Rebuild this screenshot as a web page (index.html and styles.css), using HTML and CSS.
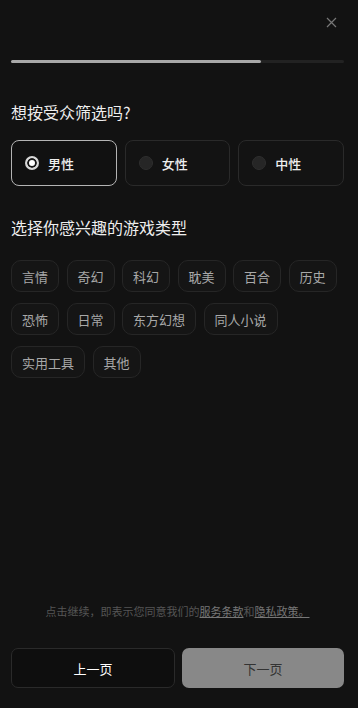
FILE: index.html
```html
<!DOCTYPE html>
<html lang="zh-CN">
<head>
    <meta charset="UTF-8">
    <meta name="viewport" content="width=device-width, initial-scale=1.0">
    <title>偏好设置</title>
    <link rel="stylesheet" href="styles.css">
</head>
<body>
    <div class="page">
        <div class="top">
            <button class="close" aria-label="关闭">
                <svg width="11" height="11" viewBox="0 0 11 11">
                    <path d="M1 1 L10 10 M10 1 L1 10" stroke="#777" stroke-width="1.2" fill="none"/>
                </svg>
            </button>
        </div>

        <div class="progress"><div class="progress-fill"></div></div>

        <div class="title">想按受众筛选吗?</div>
        <div class="genders">
            <div class="gender selected"><span class="radio"></span>男性</div>
            <div class="gender"><span class="radio"></span>女性</div>
            <div class="gender"><span class="radio"></span>中性</div>
        </div>

        <div class="title title-second">选择你感兴趣的游戏类型</div>
        <div class="tags">
            <span class="tag">言情</span>
            <span class="tag">奇幻</span>
            <span class="tag">科幻</span>
            <span class="tag">耽美</span>
            <span class="tag">百合</span>
            <span class="tag">历史</span>
            <span class="tag">恐怖</span>
            <span class="tag">日常</span>
            <span class="tag">东方幻想</span>
            <span class="tag">同人小说</span>
            <span class="tag">实用工具</span>
            <span class="tag">其他</span>
        </div>

        <div class="footer">
            <p class="terms">点击继续，即表示您同意我们的<a href="#">服务条款</a>和<a href="#">隐私政策。</a></p>
            <div class="actions">
                <button class="btn btn-prev">上一页</button>
                <button class="btn btn-next">下一页</button>
            </div>
        </div>
    </div>
</body>
</html>
```

FILE: styles.css
```css
body {
    margin: 0;
    background-color: #121212;
    font-family: "Noto Sans CJK SC", "Noto Sans", sans-serif;
    color: #eee;
}

.page {
    display: flex;
    flex-direction: column;
    height: 100vh;
    padding: 0 14px 20px 11px;
    box-sizing: border-box;
}

.top {
    height: 45px;
    display: flex;
    justify-content: flex-end;
    align-items: center;
    padding-right: 7px;
}

.close {
    background: none;
    border: none;
    padding: 0;
    width: 11px;
    height: 11px;
    display: flex;
    cursor: pointer;
}

.progress {
    margin-top: 15px;
    height: 3px;
    background-color: #222;
    border-radius: 2px;
}

.progress-fill {
    width: 75%;
    height: 100%;
    background-color: #a8a8a8;
    border-radius: 2px;
}

.title {
    margin-top: 37px;
    font-size: 16px;
    line-height: 24px;
    color: #eee;
}

.title-second {
    margin-top: 29px;
}

.genders {
    display: flex;
    gap: 8px;
    margin-top: 16px;
}

.gender {
    flex: 1;
    height: 46px;
    box-sizing: border-box;
    display: flex;
    align-items: center;
    gap: 9px;
    padding-left: 13px;
    border: 1px solid #2a2a2a;
    border-radius: 8px;
    background-color: #131313;
    font-size: 13px;
    font-weight: 500;
    color: #eee;
    cursor: pointer;
}

.gender.selected {
    border-color: #b4b4b4;
    background-color: #111;
}

.radio {
    width: 14px;
    height: 14px;
    box-sizing: border-box;
    border-radius: 50%;
    background-color: #262626;
    border: 1px solid #2e2e2e;
}

.gender.selected .radio {
    border: 2px solid #d8d8d8;
    background-color: #fff;
    box-shadow: inset 0 0 0 2px #151515;
}

.tags {
    display: flex;
    flex-wrap: wrap;
    gap: 11px 7.5px;
    margin-top: 21px;
}

.tag {
    height: 32px;
    box-sizing: border-box;
    display: flex;
    align-items: center;
    padding: 0 10px;
    border: 1px solid #262626;
    border-radius: 10px;
    background-color: #151515;
    font-size: 13px;
    color: #a8a8a8;
    cursor: pointer;
}

.footer {
    margin-top: auto;
}

.terms {
    margin: 0;
    text-align: center;
    font-size: 11px;
    line-height: 16px;
    color: #555;
}

.terms a {
    color: #777;
}

.actions {
    display: flex;
    gap: 7px;
    margin-top: 29px;
}

.btn {
    flex: 1;
    height: 40px;
    border-radius: 7px;
    font-family: inherit;
    font-size: 13px;
    cursor: pointer;
}

.btn-prev {
    background-color: #0e0e0e;
    border: 1px solid #2a2a2a;
    color: #fff;
}

.btn-next {
    background-color: #888;
    border: none;
    color: #333;
}
```
